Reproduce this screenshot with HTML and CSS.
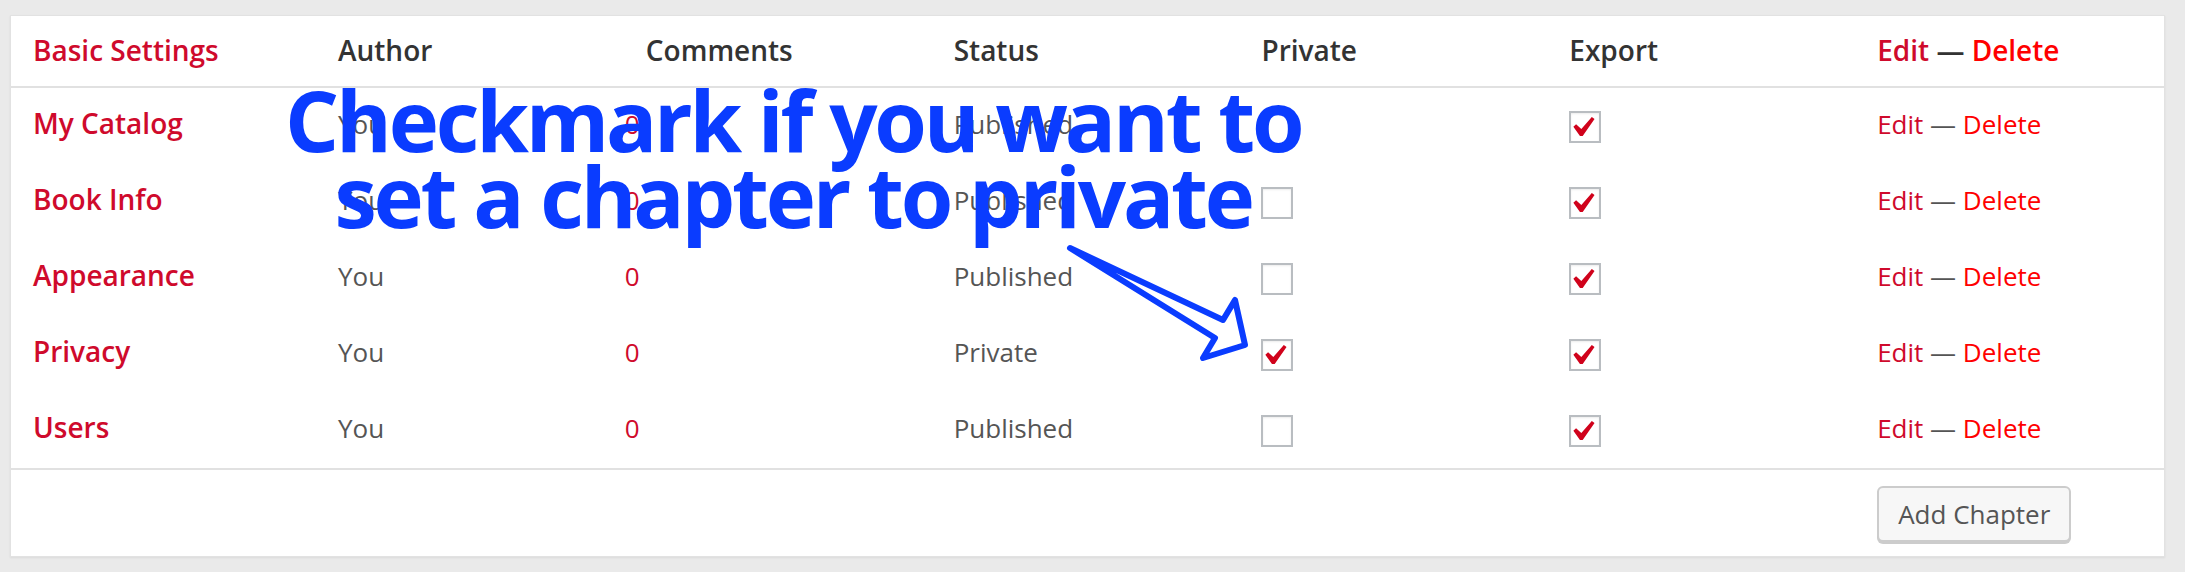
FILE: index.html
```html
<!DOCTYPE html>
<html lang="en">
<head>
    <meta charset="UTF-8">
    <title>Chapters</title>
    <link rel="stylesheet" href="styles.css">
</head>
<body>
    <div class="card">
        <table class="chapters">
            <colgroup>
                <col class="col-title">
                <col><col><col><col><col><col>
            </colgroup>
            <thead>
                <tr>
                    <th class="part-title">Basic Settings</th>
                    <th>Author</th>
                    <th>Comments</th>
                    <th>Status</th>
                    <th>Private</th>
                    <th>Export</th>
                    <th><span class="edit">Edit</span> <span class="dash">—</span> <span class="delete">Delete</span></th>
                </tr>
            </thead>
            <tbody>
                <tr>
                    <td class="title">My Catalog</td>
                    <td>You</td>
                    <td class="count">0</td>
                    <td>Published</td>
                    <td></td>
                    <td><span class="check is-checked"><svg viewBox="5.3 4.4 11.4 10.3" width="24" height="21"><path d="M14.83 4.89l1.34.94-5.81 8.38H9.02L5.78 9.67l1.34-1.25 2.57 2.4z"/></svg></span></td>
                    <td><span class="edit">Edit</span> <span class="dash">—</span> <span class="delete">Delete</span></td>
                </tr>
                <tr>
                    <td class="title">Book Info</td>
                    <td>You</td>
                    <td class="count">0</td>
                    <td>Published</td>
                    <td><span class="check"></span></td>
                    <td><span class="check is-checked"><svg viewBox="5.3 4.4 11.4 10.3" width="24" height="21"><path d="M14.83 4.89l1.34.94-5.81 8.38H9.02L5.78 9.67l1.34-1.25 2.57 2.4z"/></svg></span></td>
                    <td><span class="edit">Edit</span> <span class="dash">—</span> <span class="delete">Delete</span></td>
                </tr>
                <tr>
                    <td class="title">Appearance</td>
                    <td>You</td>
                    <td class="count">0</td>
                    <td>Published</td>
                    <td><span class="check"></span></td>
                    <td><span class="check is-checked"><svg viewBox="5.3 4.4 11.4 10.3" width="24" height="21"><path d="M14.83 4.89l1.34.94-5.81 8.38H9.02L5.78 9.67l1.34-1.25 2.57 2.4z"/></svg></span></td>
                    <td><span class="edit">Edit</span> <span class="dash">—</span> <span class="delete">Delete</span></td>
                </tr>
                <tr>
                    <td class="title">Privacy</td>
                    <td>You</td>
                    <td class="count">0</td>
                    <td>Private</td>
                    <td><span class="check is-checked"><svg viewBox="5.3 4.4 11.4 10.3" width="24" height="21"><path d="M14.83 4.89l1.34.94-5.81 8.38H9.02L5.78 9.67l1.34-1.25 2.57 2.4z"/></svg></span></td>
                    <td><span class="check is-checked"><svg viewBox="5.3 4.4 11.4 10.3" width="24" height="21"><path d="M14.83 4.89l1.34.94-5.81 8.38H9.02L5.78 9.67l1.34-1.25 2.57 2.4z"/></svg></span></td>
                    <td><span class="edit">Edit</span> <span class="dash">—</span> <span class="delete">Delete</span></td>
                </tr>
                <tr>
                    <td class="title">Users</td>
                    <td>You</td>
                    <td class="count">0</td>
                    <td>Published</td>
                    <td><span class="check"></span></td>
                    <td><span class="check is-checked"><svg viewBox="5.3 4.4 11.4 10.3" width="24" height="21"><path d="M14.83 4.89l1.34.94-5.81 8.38H9.02L5.78 9.67l1.34-1.25 2.57 2.4z"/></svg></span></td>
                    <td><span class="edit">Edit</span> <span class="dash">—</span> <span class="delete">Delete</span></td>
                </tr>
            </tbody>
            <tfoot>
                <tr>
                    <td colspan="6"></td>
                    <td class="actions"><button class="add-chapter">Add Chapter</button></td>
                </tr>
            </tfoot>
        </table>

        <!-- annotation drawn on top of the table -->
        <div class="callout">Checkmark if you want to<br>set a chapter to private</div>
        <svg class="callout-arrow" width="220" height="160" viewBox="0 0 220 160">
            <polygon points="20,18 173,90 185,70 195,115 153,128 165,108"/>
        </svg>
    </div>
</body>
</html>
```

FILE: styles.css
```css
body {
    margin: 0;
    padding: 15px 20px 15px 10px;
    background-color: #eaeaea;
    font-family: "Open Sans", "Noto Sans", sans-serif;
}

.card {
    position: relative;
    background-color: #fff;
    border: 1px solid #e2e2e2;
    box-shadow: 0 1px 2px rgba(0, 0, 0, 0.07);
}

.chapters {
    width: 100%;
    table-layout: fixed;
    border-collapse: separate;
    border-spacing: 0;
    font-size: 26px;
    line-height: 1.4;
    color: #555;
}

.col-title {
    width: 306px;
}

.chapters th,
.chapters td {
    padding: 0 0 0 21px;
    text-align: left;
    vertical-align: middle;
    white-space: nowrap;
}

.chapters th:first-child,
.chapters td:first-child {
    padding-left: 22px;
}

.chapters thead th {
    height: 70px;
    font-size: 28px;
    font-weight: 600;
    color: #333;
    border-bottom: 2px solid #e1e1e1;
}

.chapters tbody td {
    height: 72px;
    padding-bottom: 4px;
}

.chapters .part-title,
.chapters .title {
    font-size: 28px;
    font-weight: 600;
    color: #cf0a2c;
}

.chapters .count {
    padding-left: 0;
    color: #cf0a2c;
}

.edit {
    color: #cf0a2c;
}

.dash {
    color: #555;
}

thead .dash {
    color: #333;
}

.delete {
    color: #f00;
}

.check {
    display: inline-flex;
    align-items: center;
    justify-content: center;
    box-sizing: border-box;
    width: 32px;
    height: 32px;
    border: 2px solid #b9bdc1;
    background-color: #fff;
    box-shadow: inset 0 1px 2px rgba(0, 0, 0, 0.08);
    vertical-align: middle;
}

.check svg {
    fill: #d0021b;
    margin-left: -2px;
}

.chapters tfoot td {
    height: 86px;
    border-top: 2px solid #e1e1e1;
    vertical-align: top;
}

.chapters tfoot .actions {
    height: 70px;
    padding-top: 16px;
}

.add-chapter {
    height: 56px;
    padding: 0 19px;
    font-family: inherit;
    font-size: 26px;
    color: #555;
    background-color: #f7f7f7;
    border: 2px solid #ccc;
    border-radius: 6px;
    box-shadow: 0 2px 0 #ccc;
    cursor: pointer;
}

/* blue screenshot annotation */
.callout {
    position: absolute;
    left: 274px;
    top: 65px;
    font-size: 85px;
    font-weight: 700;
    line-height: 76px;
    letter-spacing: -3.2px;
    color: #0a3cff;
    text-align: center;
    white-space: nowrap;
}

.callout-arrow {
    position: absolute;
    left: 1039px;
    top: 214px;
    fill: none;
    stroke: #0a3cff;
    stroke-width: 6;
    stroke-linejoin: round;
}
```
